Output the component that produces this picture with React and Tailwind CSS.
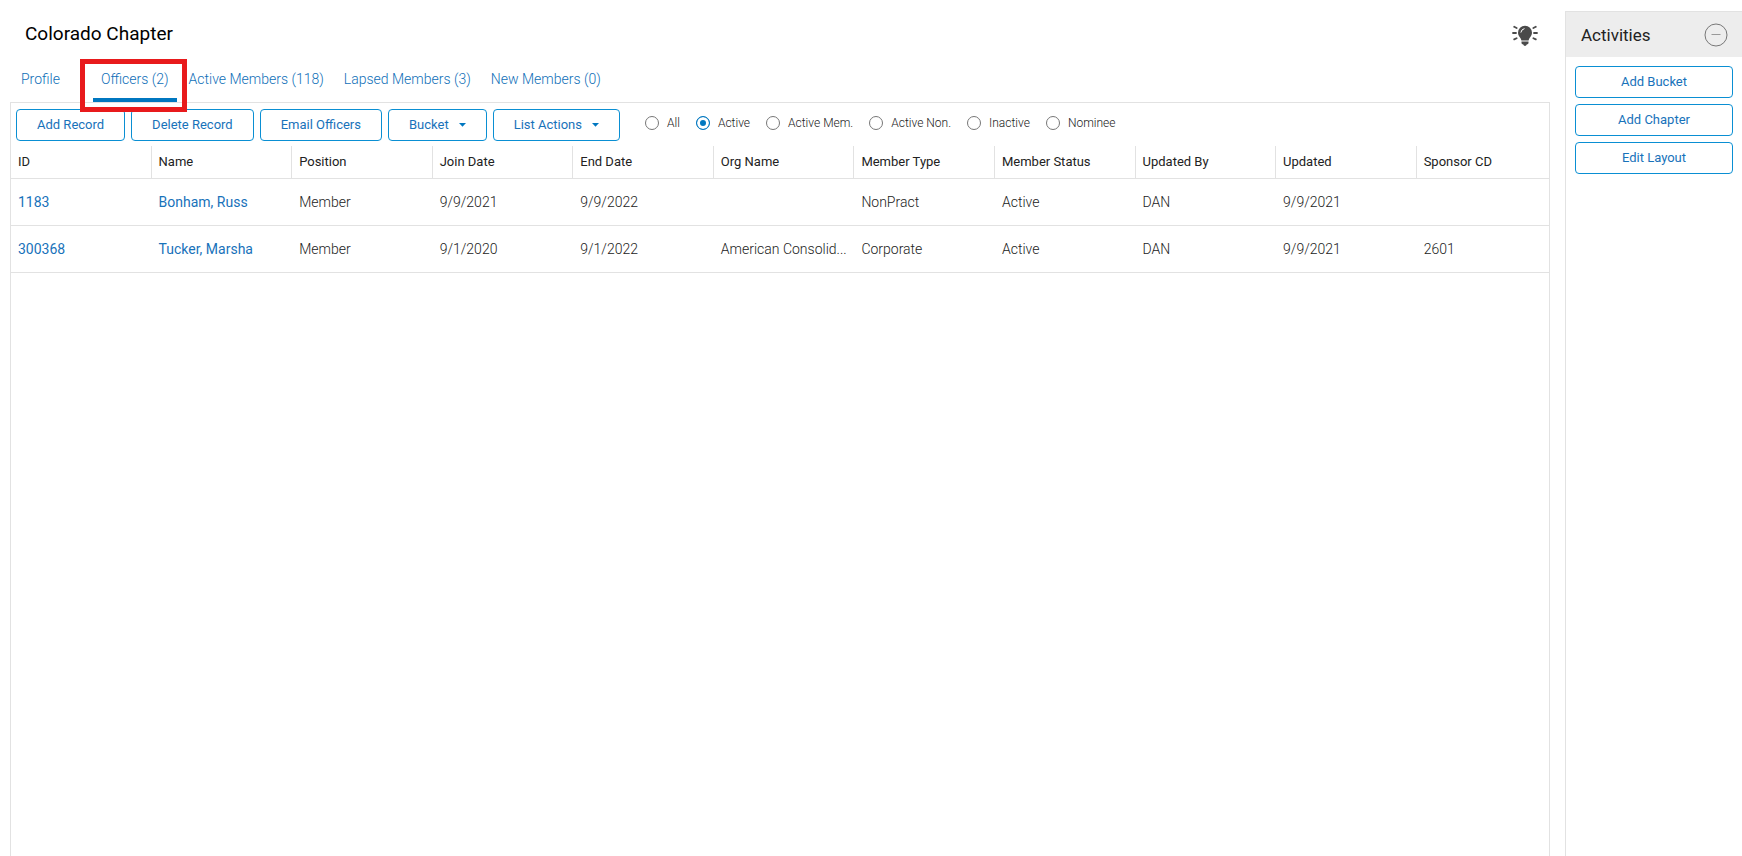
import React, { useState } from "react";

const tabs = [
  "Profile",
  "Officers (2)",
  "Active Members (118)",
  "Lapsed Members (3)",
  "New Members (0)",
];

const filters = ["All", "Active", "Active Mem.", "Active Non.", "Inactive", "Nominee"];

const columns = [
  "ID",
  "Name",
  "Position",
  "Join Date",
  "End Date",
  "Org Name",
  "Member Type",
  "Member Status",
  "Updated By",
  "Updated",
  "Sponsor CD",
];

const rows = [
  ["1183", "Bonham, Russ", "Member", "9/9/2021", "9/9/2022", "", "NonPract", "Active", "DAN", "9/9/2021", ""],
  ["300368", "Tucker, Marsha", "Member", "9/1/2020", "9/1/2022", "American Consolid...", "Corporate", "Active", "DAN", "9/9/2021", "2601"],
];

const BulbIcon = () => (
  <svg width="26" height="22" viewBox="0 0 26 22" fill="none" aria-hidden="true">
    <path
      d="M13 .8a7 7 0 0 0-7 7c0 2.3 1.2 3.6 2.2 5 .6.9 1 1.7 1.2 2.6h7.2c.2-.9.6-1.7 1.2-2.6 1-1.4 2.2-2.7 2.2-5a7 7 0 0 0-7-7z"
      fill="#4a4a4a"
    />
    <path d="M8.9 7.2a4.2 4.2 0 0 1 3.2-3.5" stroke="#fff" strokeWidth="1" strokeLinecap="round" />
    <path d="M9.5 16.6h7v1.3a1.4 1.4 0 0 1-1 1.3l-.8.3c-.2.9-.9 1.4-1.7 1.4s-1.5-.5-1.7-1.4l-.8-.3a1.4 1.4 0 0 1-1-1.3z" fill="#4a4a4a" />
    <path
      d="M1 8h3M22 8h3M2.2 1.8l2.4 1.2M23.8 1.8l-2.4 1.2M2.2 14.4l2.4-1.2M23.8 14.4l-2.4-1.2"
      stroke="#4a4a4a"
      strokeWidth="1.8"
      strokeLinecap="round"
    />
  </svg>
);

const Button = ({ children, menu }) => (
  <button
    type="button"
    className="h-8 px-5 rounded border border-[#0a8fd3] bg-white text-[13px] leading-5 text-[#1872ba] flex items-center justify-center whitespace-nowrap"
  >
    {children}
    {menu && (
      <svg width="7" height="4" viewBox="0 0 7 4" className="ml-2.5" aria-hidden="true">
        <path d="M0 0h7L3.5 3.8z" fill="#0077c0" />
      </svg>
    )}
  </button>
);

const App = () => {
  const [activeTab, setActiveTab] = useState("Officers (2)");
  const [filter, setFilter] = useState("Active");

  return (
    <div className="min-h-screen bg-white flex font-['Roboto',sans-serif] text-[#222]">
      <main className="flex-1 min-w-0 flex flex-col pl-2.5 pr-[15px]">
        <div className="h-[68px] pl-[15px] pr-3 flex items-center justify-between">
          <h1 className="text-[19px] leading-6 text-black">Colorado Chapter</h1>
          <button type="button" aria-label="Tips" className="pt-1">
            <BulbIcon />
          </button>
        </div>

        <nav className="h-[34px] pl-[3px] flex gap-1">
          {tabs.map((tab) => (
            <button
              key={tab}
              type="button"
              onClick={() => setActiveTab(tab)}
              className={`relative h-[34px] px-2 pb-2 border-b-4 text-sm leading-5 font-light text-[#0f6fb8] whitespace-nowrap first:mr-[21px] ${
                tab === activeTab ? "border-[#0077c0]" : "border-transparent"
              }`}
            >
              {tab}
              {tab === activeTab && (
                <span className="absolute -left-[13px] -right-2.5 -top-[9px] -bottom-3.5 border-5 border-[#e81a1c] pointer-events-none z-10" />
              )}
            </button>
          ))}
        </nav>

        <section className="flex-1 border border-b-0 border-[#e2e2e2]">
          <div className="h-[43px] pl-[5px] pt-1.5 flex items-start gap-1.5">
            <Button>Add Record</Button>
            <Button>Delete Record</Button>
            <Button>Email Officers</Button>
            <Button menu>Bucket</Button>
            <Button menu>List Actions</Button>
            <div className="ml-[19px] h-7 flex items-center gap-4">
              {filters.map((name) => (
                <label key={name} className="flex items-center gap-2 text-xs font-light whitespace-nowrap">
                  <input
                    type="radio"
                    name="filter"
                    checked={filter === name}
                    onChange={() => setFilter(name)}
                    className="appearance-none w-3.5 h-3.5 rounded-full border border-[#777] bg-white checked:border-[#0077c0] checked:bg-[#0077c0] checked:shadow-[inset_0_0_0_3px_white]"
                  />
                  {name}
                </label>
              ))}
            </div>
          </div>

          <table className="w-full table-fixed border-separate border-spacing-0 text-left">
            <colgroup>
              {columns.slice(0, -1).map((name) => (
                <col key={name} className="w-[9.14%]" />
              ))}
              <col />
            </colgroup>
            <thead>
              <tr>
                {columns.map((name) => (
                  <th
                    key={name}
                    className="h-[33px] pl-[7px] pr-1 text-[13px] leading-5 font-normal border-b border-r border-[#e2e2e2] last:border-r-0"
                  >
                    {name}
                  </th>
                ))}
              </tr>
            </thead>
            <tbody>
              {rows.map((row) => (
                <tr key={row[0]}>
                  {row.map((cell, i) => (
                    <td key={i} className="h-[47px] pl-[7px] pr-1 text-sm font-light truncate border-b border-[#e2e2e2]">
                      {i < 2 ? (
                        <a href="#" className="font-normal text-[#1872ba]">
                          {cell}
                        </a>
                      ) : (
                        cell
                      )}
                    </td>
                  ))}
                </tr>
              ))}
            </tbody>
          </table>
        </section>
      </main>

      <aside className="w-[177px] mt-[11px] border-l border-t border-[#e2e2e2]">
        <div className="h-[45px] pl-[15px] pr-3.5 bg-[#ededed] flex items-center justify-between">
          <h2 className="text-[17px] leading-6">Activities</h2>
          <button type="button" aria-label="Collapse">
            <svg width="24" height="24" viewBox="0 0 24 24" fill="none" stroke="#777" aria-hidden="true">
              <circle cx="12" cy="12" r="11" />
              <path d="M7.5 11.5h9" stroke="#999" />
            </svg>
          </button>
        </div>
        <div className="pt-[9px] px-[9px] flex flex-col gap-1.5">
          <Button>Add Bucket</Button>
          <Button>Add Chapter</Button>
          <Button>Edit Layout</Button>
        </div>
      </aside>
    </div>
  );
};

export default App;
